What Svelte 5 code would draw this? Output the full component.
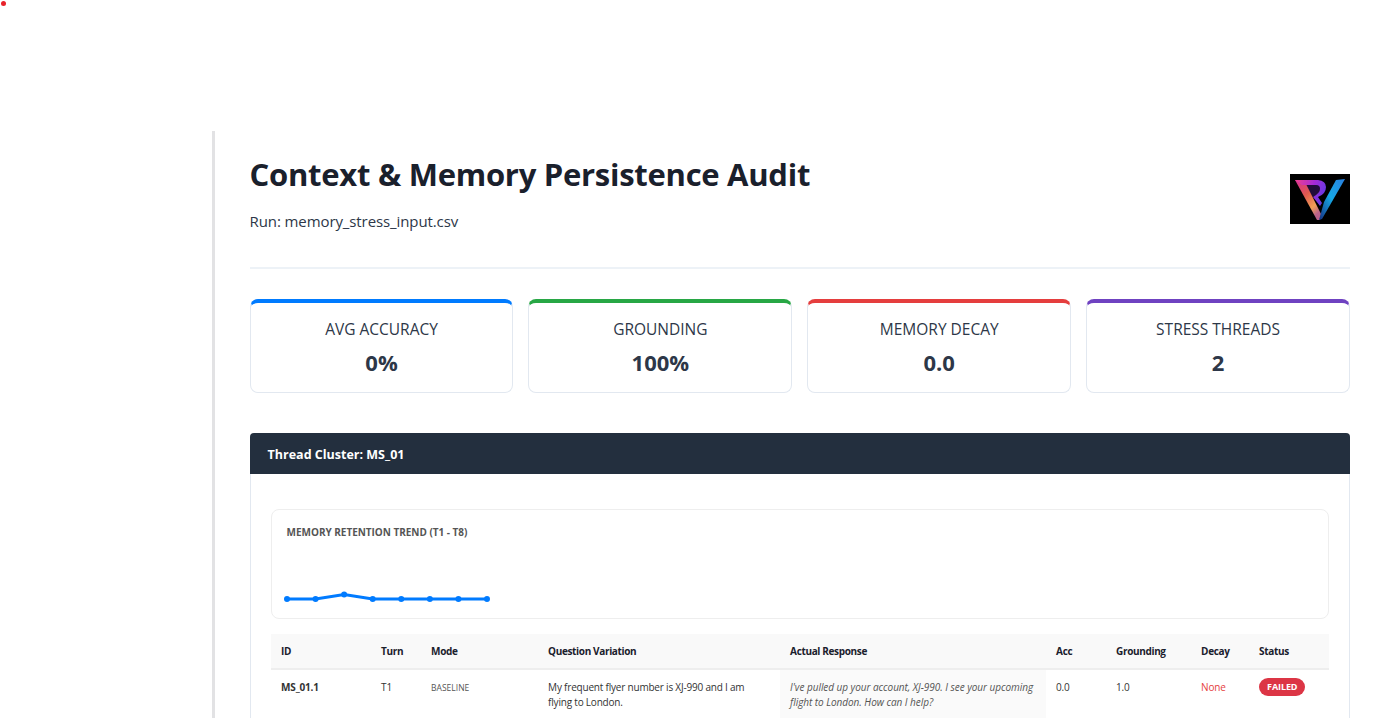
<script>
  const cards = [
    { label: 'AVG ACCURACY', value: '0%', color: '#007bff' },
    { label: 'GROUNDING', value: '100%', color: '#28a745' },
    { label: 'MEMORY DECAY', value: '0.0', color: '#e53e3e' },
    { label: 'STRESS THREADS', value: '2', color: '#6f42c1' }
  ];

  // retention per turn, 1.0 is the flat line
  const trend = [1, 1, 1.15, 1, 1, 1, 1, 1];
  const points = trend.map((v, i) => [16 + i * 28.57, 90 - v * 30]);
  const line = points.map((p) => p.join(',')).join(' ');
</script>

<div class="dot"></div>

<main class="page">
  <div class="report">
    <header class="head">
      <div>
        <h1>Context &amp; Memory Persistence Audit</h1>
        <p>Run: memory_stress_input.csv</p>
      </div>
      <svg class="logo" viewBox="0 0 60 50" aria-label="logo">
        <defs>
          <linearGradient id="lg-left" x1="0" y1="0" x2="0.6" y2="1">
            <stop offset="0" stop-color="#d42c9c" />
            <stop offset="0.45" stop-color="#e0584e" />
            <stop offset="0.8" stop-color="#f0a056" />
            <stop offset="1" stop-color="#b8608a" />
          </linearGradient>
          <linearGradient id="lg-top" x1="0" y1="0" x2="1" y2="0.3">
            <stop offset="0" stop-color="#f2408a" />
            <stop offset="0.6" stop-color="#a62bd8" />
            <stop offset="1" stop-color="#6a38e0" />
          </linearGradient>
          <linearGradient id="lg-right" x1="1" y1="0" x2="0" y2="1">
            <stop offset="0" stop-color="#2a7fe0" />
            <stop offset="0.5" stop-color="#16a8e6" />
            <stop offset="1" stop-color="#152f80" />
          </linearGradient>
          <filter id="soft"><feGaussianBlur stdDeviation="0.4" /></filter>
        </defs>
        <rect width="60" height="50" fill="#000" />
        <g filter="url(#soft)">
          <path d="M14 11 L26 11 Q30 11 30 15 Q30 20 23 23 L28 40 Z" fill="#24103a" />
          <path d="M5 6 L14 6 L31 40 L30 46 L27 46 Z" fill="url(#lg-left)" />
          <path d="M5 6 L28 6 Q36 7 36 13 Q36 20 28 23 L32 29 L30 32 L23 23 Q30 19 30 15 Q30 11 26 11 L12 11 Z" fill="url(#lg-top)" />
          <path d="M46 6 L55 5 L32 45 L29 46 L34 28 Z" fill="url(#lg-right)" />
        </g>
      </svg>
    </header>

    <section class="cards">
      {#each cards as card}
        <div class="card" style="border-top-color: {card.color}">
          <div class="label">{card.label}</div>
          <div class="value">{card.value}</div>
        </div>
      {/each}
    </section>

    <section class="cluster">
      <div class="cluster-title">Thread Cluster: MS_01</div>
      <div class="cluster-body">
        <div class="trend">
          <h4>MEMORY RETENTION TREND (T1 - T8)</h4>
          <svg class="chart" viewBox="0 0 240 70">
            <polyline points={line} fill="none" stroke="#007bff" stroke-width="3" />
            {#each points as p}
              <circle cx={p[0]} cy={p[1]} r="3" fill="#007bff" />
            {/each}
          </svg>
        </div>

        <table>
          <colgroup>
            <col class="c-id" /><col class="c-turn" /><col class="c-mode" /><col class="c-q" />
            <col class="c-resp" /><col class="c-acc" /><col class="c-gr" /><col class="c-dec" /><col class="c-st" />
          </colgroup>
          <thead>
            <tr>
              <th>ID</th><th>Turn</th><th>Mode</th><th>Question Variation</th><th>Actual Response</th>
              <th>Acc</th><th>Grounding</th><th>Decay</th><th>Status</th>
            </tr>
          </thead>
          <tbody>
            <tr>
              <td><strong>MS_01.1</strong></td>
              <td>T1</td>
              <td><span class="mode">BASELINE</span></td>
              <td>My frequent flyer number is XJ-990 and I am flying to London.</td>
              <td class="resp">I've pulled up your account, XJ-990. I see your upcoming flight to London. How can I help?</td>
              <td>0.0</td>
              <td>1.0</td>
              <td class="none">None</td>
              <td><span class="badge">FAILED</span></td>
            </tr>
          </tbody>
        </table>
      </div>
    </section>
  </div>
</main>

<style>
  :global(body) {
    background: #fff;
    font-family: "Open Sans", "Noto Sans", sans-serif;
    color: #1a202c;
  }

  .dot {
    position: absolute;
    left: 1px;
    top: 1px;
    width: 5px;
    height: 5px;
    border-radius: 50%;
    background: #e8222a;
  }

  .page {
    height: 718px;
    overflow: hidden;
    padding: 131px 34px 0 212px;
    box-sizing: border-box;
  }

  .report {
    border-left: 3px solid #e2e2e4;
    padding: 19px 0 0 34.6px;
  }

  .head {
    display: flex;
    justify-content: space-between;
    align-items: flex-end;
    padding-bottom: 34px;
    border-bottom: 2px solid #edf2f7;
    margin-bottom: 30px;
  }

  h1 {
    margin: 0 0 11px;
    font-size: 31px;
    line-height: 48px;
    letter-spacing: -0.27px;
    font-weight: 700;
    color: #1a202c;
  }

  .head p {
    margin: 0;
    font-size: 15px;
    line-height: 24px;
    letter-spacing: -0.1px;
    color: #2d3748;
  }

  .logo {
    width: 60px;
    height: 50px;
    margin-bottom: 9px;
  }

  .cards {
    display: grid;
    grid-template-columns: repeat(4, 1fr);
    gap: 15px;
    margin-bottom: 40px;
  }

  .card {
    height: 94px;
    box-sizing: border-box;
    border: 1px solid #e2e8f0;
    border-top: 4px solid;
    border-radius: 8px;
    text-align: center;
    padding-top: 14px;
  }

  .label {
    font-size: 15.5px;
    line-height: 24px;
    color: #2d3748;
  }

  .value {
    font-size: 22px;
    line-height: 33px;
    margin-top: 5px;
    font-weight: 700;
    color: #2d3748;
  }

  .cluster-title {
    background: #232f3e;
    color: #fff;
    font-size: 12.5px;
    font-weight: 700;
    line-height: 43px;
    height: 41px;
    padding-left: 18px;
    border-radius: 4px 4px 0 0;
  }

  .cluster-body {
    border: 1px solid #e2e8f0;
    border-top: 0;
    padding: 35px 20px 0;
  }

  .trend {
    height: 110px;
    box-sizing: border-box;
    border: 1px solid #eee;
    border-radius: 8px;
    padding: 14px 15px 15px;
    margin-bottom: 15px;
  }

  h4 {
    margin: 0;
    font-size: 10px;
    line-height: 16px;
    letter-spacing: -0.03px;
    font-weight: 700;
    color: #555;
  }

  .chart {
    display: block;
    width: 240px;
    height: 70px;
    margin: -1px 0 0 -16px;
  }

  table {
    width: 100%;
    table-layout: fixed;
    border-collapse: collapse;
    font-size: 10px;
  }

  .c-id { width: 100px; }
  .c-turn { width: 50px; }
  .c-mode { width: 117px; }
  .c-q { width: 242px; }
  .c-resp { width: 266px; }
  .c-acc { width: 60px; }
  .c-gr { width: 85px; }
  .c-dec { width: 58px; }

  th {
    text-align: left;
    background: #f9f9f9;
    height: 35px;
    padding: 0 10px 0 10.5px;
    font-weight: 700;
    letter-spacing: -0.35px;
    color: #1a202c;
    border-bottom: 2px solid #eee;
    box-sizing: border-box;
  }

  td {
    padding: 10px 10px 10px 10.5px;
    line-height: 15px;
    letter-spacing: -0.2px;
    vertical-align: top;
    color: #333;
    border-bottom: 1px solid #f0f0f0;
  }

  .mode {
    font-size: 8.5px;
    letter-spacing: 0;
    color: #555;
  }

  .resp {
    background: #fafafa;
    font-style: italic;
    letter-spacing: -0.04px;
    color: #555;
  }

  .none {
    color: #e53e3e;
  }

  .badge {
    display: block;
    width: fit-content;
    background: #dc3545;
    color: #fff;
    font-size: 9px;
    font-weight: 700;
    letter-spacing: -0.1px;
    line-height: 18px;
    padding: 0 8px;
    border-radius: 9px;
    margin-top: -2px;
  }
</style>
